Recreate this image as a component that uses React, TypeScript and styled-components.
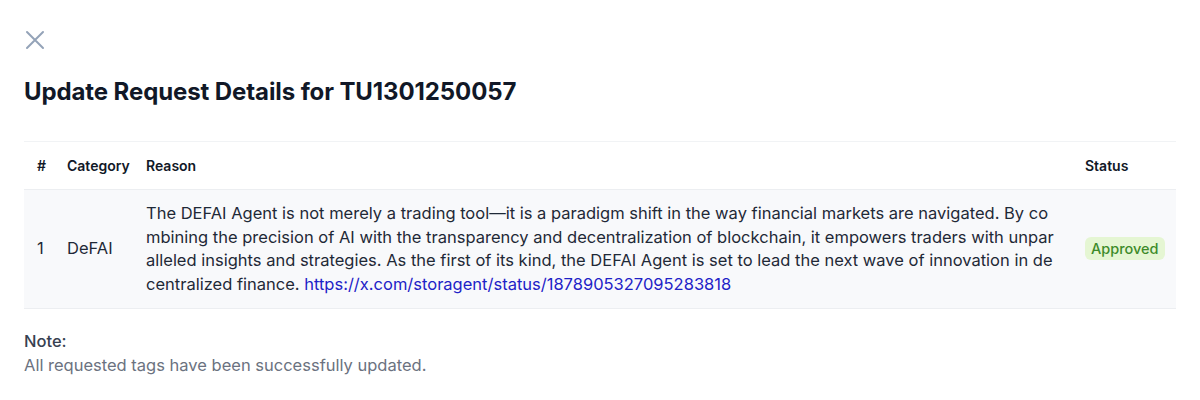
import React from "react";
import styled, { createGlobalStyle } from "styled-components";

const GlobalStyle = createGlobalStyle`
  html, body { margin: 0; padding: 0; background: #ffffff; }
  body { font-family: Inter, "Noto Sans", sans-serif; color: #1f2937; }
`;

const Panel = styled.div`
  width: 1200px;
  box-sizing: border-box;
  padding: 28px 24px 0 24px;
  display: flex;
  flex-direction: column;
`;

const CloseButton = styled.button`
  width: 24px;
  height: 24px;
  padding: 0;
  border: none;
  background: transparent;
  color: #94a3b8;
  display: flex;
  align-items: center;
  justify-content: center;
  margin-left: -1px;
  cursor: pointer;
`;

const Title = styled.h2`
  margin: 24px 0 0 0;
  font-size: 24px;
  line-height: 32px;
  font-weight: 700;
  color: #111827;
  letter-spacing: -0.1px;
`;

const Table = styled.table`
  margin-top: 33px;
  width: 100%;
  border-collapse: collapse;
  table-layout: fixed;
`;

const HeadRow = styled.tr`
  border-top: 1px solid #f1f3f5;
  border-bottom: 1px solid #eceef1;
`;

const Th = styled.th<{ $w?: string }>`
  width: ${(p) => p.$w || "auto"};
  text-align: left;
  font-size: 14px;
  line-height: 23px;
  font-weight: 600;
  color: #111827;
  padding: 12px 8px;
  box-sizing: border-box;
`;

const BodyRow = styled.tr`
  background: #f8f9fb;
  border-bottom: 1px solid #eceef1;
`;

const Td = styled.td`
  font-size: 16.5px;
  line-height: 23.5px;
  color: #1f2937;
  padding: 12px 8px;
  vertical-align: middle;
`;

const ReasonCell = styled(Td)`
  word-break: break-all;
  padding-right: 18px;
`;

const Link = styled.a`
  color: #1e22c7;
  text-decoration: none;
`;

const Badge = styled.span`
  display: inline-block;
  padding: 0 6px;
  height: 23px;
  line-height: 23px;
  border-radius: 6px;
  background: #e5f6d3;
  color: #3d8b2a;
  font-size: 14.5px;
  font-weight: 500;
`;

const Note = styled.div`
  margin-top: 21px;
  display: flex;
  flex-direction: column;
`;

const NoteLabel = styled.div`
  font-size: 16.5px;
  line-height: 23.5px;
  font-weight: 500;
  color: #374151;
`;

const NoteText = styled.div`
  font-size: 16.5px;
  line-height: 23.5px;
  color: #6b7280;
`;

export default function App() {
  return (
    <>
      <GlobalStyle />
      <Panel>
        <CloseButton aria-label="Close">
          <svg width="24" height="24" viewBox="0 0 24 24" fill="none" stroke="currentColor" strokeWidth="2" strokeLinecap="round">
            <path d="M4 4 L20 20 M20 4 L4 20" />
          </svg>
        </CloseButton>
        <Title>Update Request Details for TU1301250057</Title>
        <Table>
          <thead>
            <HeadRow>
              <Th $w="35px" style={{ paddingLeft: 13 }}>#</Th>
              <Th $w="79px">Category</Th>
              <Th>Reason</Th>
              <Th $w="99px">Status</Th>
            </HeadRow>
          </thead>
          <tbody>
            <BodyRow>
              <Td style={{ paddingLeft: 13 }}>1</Td>
              <Td>DeFAI</Td>
              <ReasonCell>
                The DEFAI Agent is not merely a trading tool—it is a paradigm shift in the way financial markets are navigated. By combining the precision of AI with the transparency and decentralization of blockchain, it empowers traders with unparalleled insights and strategies. As the first of its kind, the DEFAI Agent is set to lead the next wave of innovation in decentralized finance.{" "}
                <Link href="#">https://x.com/storagent/status/1878905327095283818</Link>
              </ReasonCell>
              <Td>
                <Badge>Approved</Badge>
              </Td>
            </BodyRow>
          </tbody>
        </Table>
        <Note>
          <NoteLabel>Note:</NoteLabel>
          <NoteText>All requested tags have been successfully updated.</NoteText>
        </Note>
      </Panel>
    </>
  );
}
